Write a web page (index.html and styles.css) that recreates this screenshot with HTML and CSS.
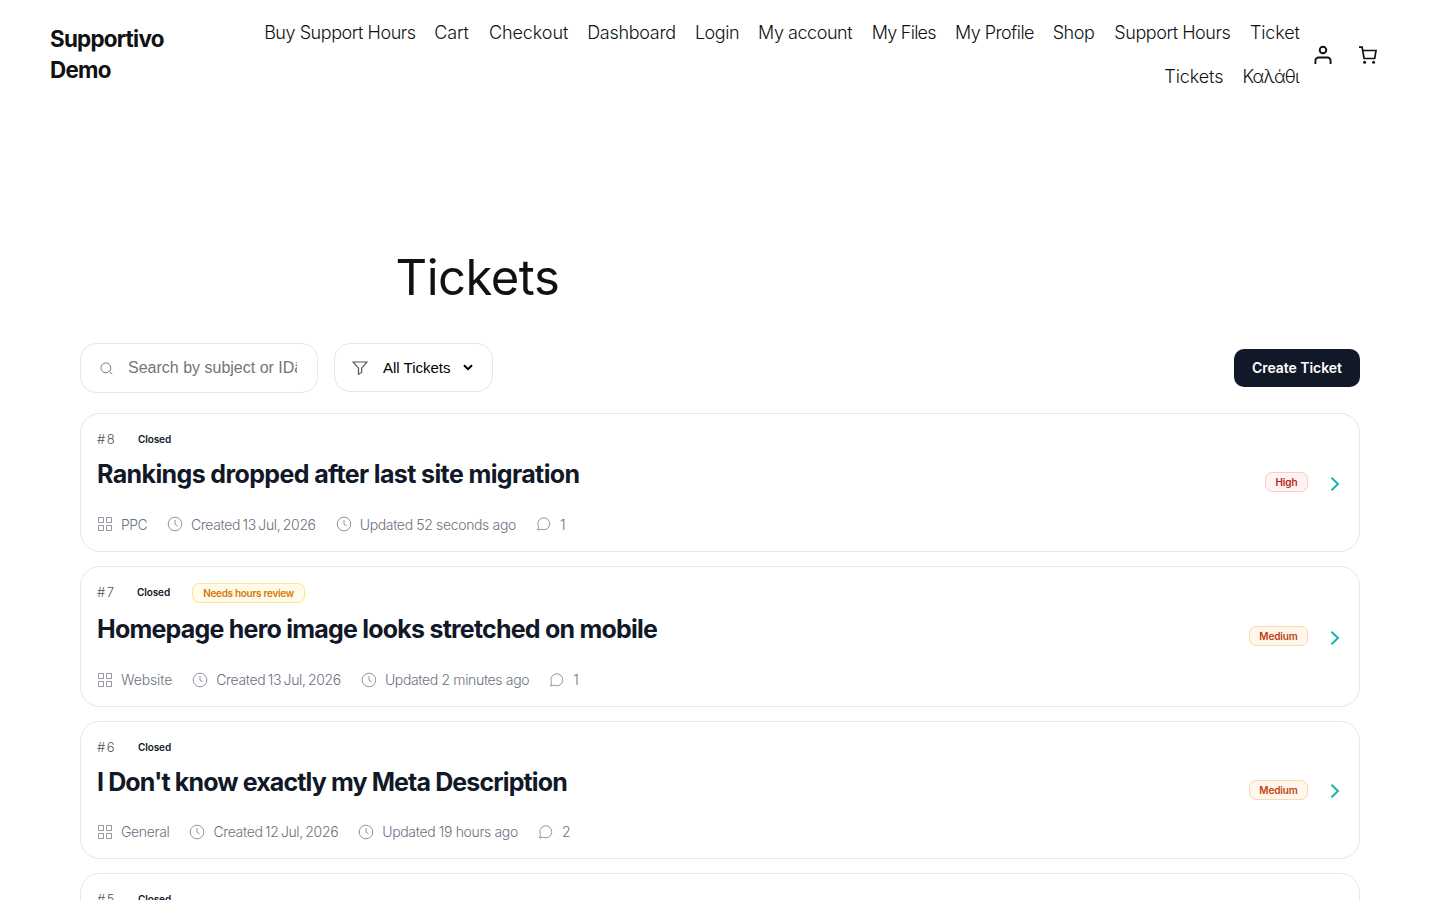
FILE: index.html
```
<!DOCTYPE html>
<html lang="en">
  <head>
    <meta charset="UTF-8" />
    <meta name="viewport" content="width=device-width, initial-scale=1.0" />
    <title>Tickets - Supportivo Demo</title>
    <link rel="stylesheet" href="styles.css">
  </head>
  <body>
    <!-- Shared icons -->
    <svg class="sprite" width="0" height="0">
      <symbol id="icon-grid" viewBox="0 0 16 16">
        <path d="M1.5 1.5h5v5h-5zM9.5 1.5h5v5h-5zM1.5 9.5h5v5h-5zM9.5 9.5h5v5h-5z" />
      </symbol>
      <symbol id="icon-clock" viewBox="0 0 16 16">
        <circle cx="8" cy="8" r="6.8" />
        <path d="M8 4v4.2l2.6 1.8" />
      </symbol>
      <symbol id="icon-chat" viewBox="0 0 16 16">
        <path d="M1.6 14l.9-3.400A6 6 0 1 1 5.200 13.200z" />
      </symbol>
      <symbol id="icon-arrow" viewBox="0 0 10 16">
        <path d="M1.500 1.800L8 8l-6.500 6.200" />
      </symbol>
    </svg>

    <header class="header">
      <a class="site-title" href="#">Supportivo Demo</a>
      <ul class="nav">
        <li class="w-buy"><a href="#">Buy Support Hours</a></li>
        <li class="w-cart"><a href="#">Cart</a></li>
        <li class="w-checkout"><a href="#">Checkout</a></li>
        <li class="w-dashboard"><a href="#">Dashboard</a></li>
        <li class="w-login"><a href="#">Login</a></li>
        <li class="w-account"><a href="#">My account</a></li>
        <li class="w-files"><a href="#">My Files</a></li>
        <li class="w-profile"><a href="#">My Profile</a></li>
        <li class="w-shop"><a href="#">Shop</a></li>
        <li class="w-support"><a href="#">Support Hours</a></li>
        <li class="w-ticket"><a href="#">Ticket</a></li>
        <li class="w-tickets"><a href="#">Tickets</a></li>
        <li class="w-kalathi"><a href="#">Καλάθι</a></li>
      </ul>
      <div class="header-icons">
        <svg class="user-icon" viewBox="0 0 18 20">
          <circle cx="9" cy="5" r="3.300" />
          <path d="M1.400 19v-3.300a3.200 3.200 0 0 1 3.200-3.200h8.800a3.200 3.200 0 0 1 3.200 3.200V19" />
        </svg>
        <svg class="cart-icon" viewBox="0 0 18 18">
          <path d="M0 1.200h3.100l2 11.300h10.600l1.300-8H3.700" />
          <circle class="wheel" cx="5.600" cy="16.200" r="1.500" />
          <circle class="wheel" cx="14.600" cy="16.200" r="1.500" />
        </svg>
      </div>
    </header>

    <h1 class="page-title">Tickets</h1>

    <main class="tickets">
      <div class="toolbar">
        <div class="search">
          <svg class="search-icon" viewBox="0 0 14 14">
            <circle cx="6.300" cy="6.300" r="5.300" />
            <path d="M10.200 10.200l3 3" />
          </svg>
          <span class="search-text">Search by subject or IDâ€¦</span>
        </div>
        <div class="filter">
          <svg class="filter-icon" viewBox="0 0 16 14">
            <path d="M1 1h14L9.700 7.200v4.300l-3.200 1.700v-6z" />
          </svg>
          <span class="filter-text">All Tickets</span>
          <svg class="caret" viewBox="0 0 10 7">
            <path d="M1 1.200l4 4 4-4" />
          </svg>
        </div>
        <button class="create">Create Ticket</button>
      </div>

      <div class="card">
        <div class="card-body">
          <div class="card-top"><span class="number">#8</span><span class="status">Closed</span></div>
          <h2 class="t8">Rankings dropped after last site migration</h2>
          <div class="meta">
            <span class="item ppc"><svg><use href="#icon-grid" /></svg>PPC</span>
            <span class="item created"><svg><use href="#icon-clock" /></svg>Created 13 Jul, 2026</span>
            <span class="item"><svg><use href="#icon-clock" /></svg>Updated 52 seconds ago</span>
            <span class="item"><svg><use href="#icon-chat" /></svg>1</span>
          </div>
        </div>
        <span class="badge high">High</span>
        <svg class="arrow"><use href="#icon-arrow" /></svg>
      </div>

      <div class="card tall">
        <div class="card-body">
          <div class="card-top"><span class="number">#7</span><span class="status">Closed</span><span class="badge review">Needs hours review</span></div>
          <h2 class="t7">Homepage hero image looks stretched on mobile</h2>
          <div class="meta">
            <span class="item website"><svg><use href="#icon-grid" /></svg>Website</span>
            <span class="item created"><svg><use href="#icon-clock" /></svg>Created 13 Jul, 2026</span>
            <span class="item"><svg><use href="#icon-clock" /></svg>Updated 2 minutes ago</span>
            <span class="item"><svg><use href="#icon-chat" /></svg>1</span>
          </div>
        </div>
        <span class="badge medium">Medium</span>
        <svg class="arrow"><use href="#icon-arrow" /></svg>
      </div>

      <div class="card">
        <div class="card-body">
          <div class="card-top"><span class="number">#6</span><span class="status">Closed</span></div>
          <h2 class="t6">I Don't know exactly my Meta Description</h2>
          <div class="meta">
            <span class="item"><svg><use href="#icon-grid" /></svg>General</span>
            <span class="item created"><svg><use href="#icon-clock" /></svg>Created 12 Jul, 2026</span>
            <span class="item"><svg><use href="#icon-clock" /></svg>Updated 19 hours ago</span>
            <span class="item"><svg><use href="#icon-chat" /></svg>2</span>
          </div>
        </div>
        <span class="badge medium">Medium</span>
        <svg class="arrow"><use href="#icon-arrow" /></svg>
      </div>

      <div class="card">
        <div class="card-body">
          <div class="card-top"><span class="number">#5</span><span class="status">Closed</span></div>
        </div>
      </div>
    </main>
  </body>
</html>
```
FILE: styles.css
```
* {
  margin: 0;
  padding: 0;
  box-sizing: border-box;
}

body {
  font-family: Inter, "Liberation Sans", sans-serif;
  background-color: #fff;
  color: #111;
  height: 900px;
  overflow: hidden;
}

svg {
  fill: none;
  stroke: currentColor;
  flex-shrink: 0;
}

.sprite {
  position: absolute;
}

a {
  color: inherit;
  text-decoration: none;
}

.header {
  display: flex;
  align-items: center;
  height: 110px;
  padding: 0 63px 0 50px;
}

.site-title {
  width: 150px;
  margin-bottom: 2px;
  font-size: 22.4px;
  font-weight: 700;
  line-height: 31px;
  letter-spacing: -0.75px;
}

.nav {
  flex: 1;
  list-style: none;
  display: flex;
  flex-wrap: wrap;
  justify-content: flex-end;
  gap: 14px 19.2px;
  font-size: 18px;
  font-weight: 300;
  line-height: 30px;
  letter-spacing: -0.45px;
  white-space: nowrap;
}

.w-buy { width: 151px; }
.w-cart { width: 35.5px; letter-spacing: -0.2px; }
.w-checkout { width: 79px; letter-spacing: -0.1px; }
.w-dashboard { width: 88.5px; letter-spacing: -0.3px; }
.w-login { width: 44px; }
.w-account { width: 94.5px; }
.w-files { width: 64px; letter-spacing: -0.75px; }
.w-profile { width: 78.5px; letter-spacing: -0.55px; }
.w-shop { width: 42.5px; }
.w-support { width: 116.5px; }
.w-ticket { width: 50px; letter-spacing: -0.15px; }
.w-tickets { width: 59px; letter-spacing: -0.1px; }
.w-kalathi { width: 57.5px; letter-spacing: -0.85px; }

.header-icons {
  display: flex;
  align-items: center;
  gap: 27px;
  margin-left: 14px;
}

.user-icon {
  width: 18px;
  height: 20px;
  stroke-width: 1.9;
}

.cart-icon {
  width: 18px;
  height: 18px;
  stroke-width: 1.7;
}

.wheel {
  fill: currentColor;
  stroke: none;
}

.page-title {
  width: 649px;
  margin: 135px auto 0;
  font-size: 49px;
  font-weight: 400;
  line-height: 66px;
  letter-spacing: -0.5px;
}

.tickets {
  width: 1280px;
  margin: 32px auto 0;
}

.toolbar {
  display: flex;
  align-items: center;
  gap: 16px;
  height: 50px;
  margin-bottom: 20px;
}

.search,
.filter {
  display: flex;
  align-items: center;
  border: 1px solid #e5e7eb;
  border-radius: 16px;
  font-family: "Liberation Sans", Arial, sans-serif;
}

.search {
  width: 238px;
  height: 50px;
  padding: 0 20px 0 19px;
  color: #757575;
}

.search-icon {
  width: 13px;
  height: 13px;
  margin-right: 15px;
}

.search-text {
  flex: 1;
  font-size: 16px;
  white-space: nowrap;
  overflow: hidden;
}

.filter {
  width: 159px;
  height: 49px;
  padding: 0 19px 0 17px;
  margin-bottom: 1px;
  font-size: 15px;
  color: #000;
}

.filter-icon {
  width: 16px;
  height: 14px;
  margin-right: 15px;
  color: #555;
  stroke-width: 1.2;
}

.caret {
  width: 10px;
  height: 7px;
  margin-left: auto;
  stroke-width: 2;
}

.create {
  width: 126px;
  height: 38px;
  margin-left: auto;
  padding-bottom: 2px;
  border: none;
  border-radius: 10px;
  background-color: #111827;
  color: #fff;
  font-family: Inter, sans-serif;
  font-size: 14px;
  font-weight: 600;
  letter-spacing: -0.05px;
  white-space: nowrap;
}

.card {
  display: flex;
  align-items: center;
  height: 138.6px;
  margin-bottom: 14px;
  padding: 16px;
  border: 1px solid #e5e7eb;
  border-radius: 20px;
}

.card.tall {
  height: 141px;
}

.card-body {
  flex: 1;
  align-self: flex-start;
}

.card-top {
  display: flex;
  align-items: center;
  height: 19px;
}

.tall .card-top {
  height: 20px;
}

.number {
  width: 41px;
  font-size: 13px;
  font-weight: 300;
  line-height: 17px;
  letter-spacing: 1.4px;
  color: #4b5563;
}

.tall .number {
  width: 40px;
}

.status {
  width: 55px;
  font-size: 10px;
  font-weight: 600;
  line-height: 13px;
  letter-spacing: -0.12px;
  color: #111827;
}

.card h2 {
  margin-top: 8.4px;
  font-size: 25px;
  font-weight: 700;
  line-height: 34px;
  color: #111827;
  white-space: nowrap;
}

.card .t8 { letter-spacing: -0.62px; }
.card .t7 { letter-spacing: -0.78px; }
.card .t6 { letter-spacing: -0.88px; }

.tall h2 {
  margin-top: 9.4px;
}

.meta {
  display: flex;
  align-items: center;
  gap: 20px;
  height: 22px;
  margin-top: 22px;
  font-size: 14px;
  font-weight: 300;
  letter-spacing: -0.35px;
  color: #6b7280;
}

.tall .meta {
  margin-top: 23px;
}

.item {
  display: flex;
  align-items: center;
}

.ppc {
  width: 50px;
  letter-spacing: -0.6px;
}

.website {
  width: 75.2px;
  letter-spacing: -0.12px;
}

.created {
  word-spacing: -1.1px;
}

.item svg {
  width: 16px;
  height: 16px;
  margin-right: 8px;
  stroke-width: 0.75;
}

.badge {
  height: 20px;
  border: 1px solid;
  border-radius: 7px;
  font-size: 10px;
  font-weight: 600;
  line-height: 18px;
  letter-spacing: -0.12px;
  text-align: center;
  white-space: nowrap;
}

.high {
  width: 43px;
  background-color: #fef2f2;
  border-color: #fecaca;
  color: #b91c1c;
}

.medium {
  width: 59px;
  background-color: #fff7ed;
  border-color: #fed7aa;
  color: #c2410c;
}

.review {
  width: 113px;
  background-color: #fffbeb;
  border-color: #fde68a;
  color: #d97706;
  letter-spacing: -0.3px;
}

.arrow {
  width: 10px;
  height: 16px;
  margin: 3px 3px 0 22px;
  color: #14b8a6;
  stroke-width: 2;
}
```
